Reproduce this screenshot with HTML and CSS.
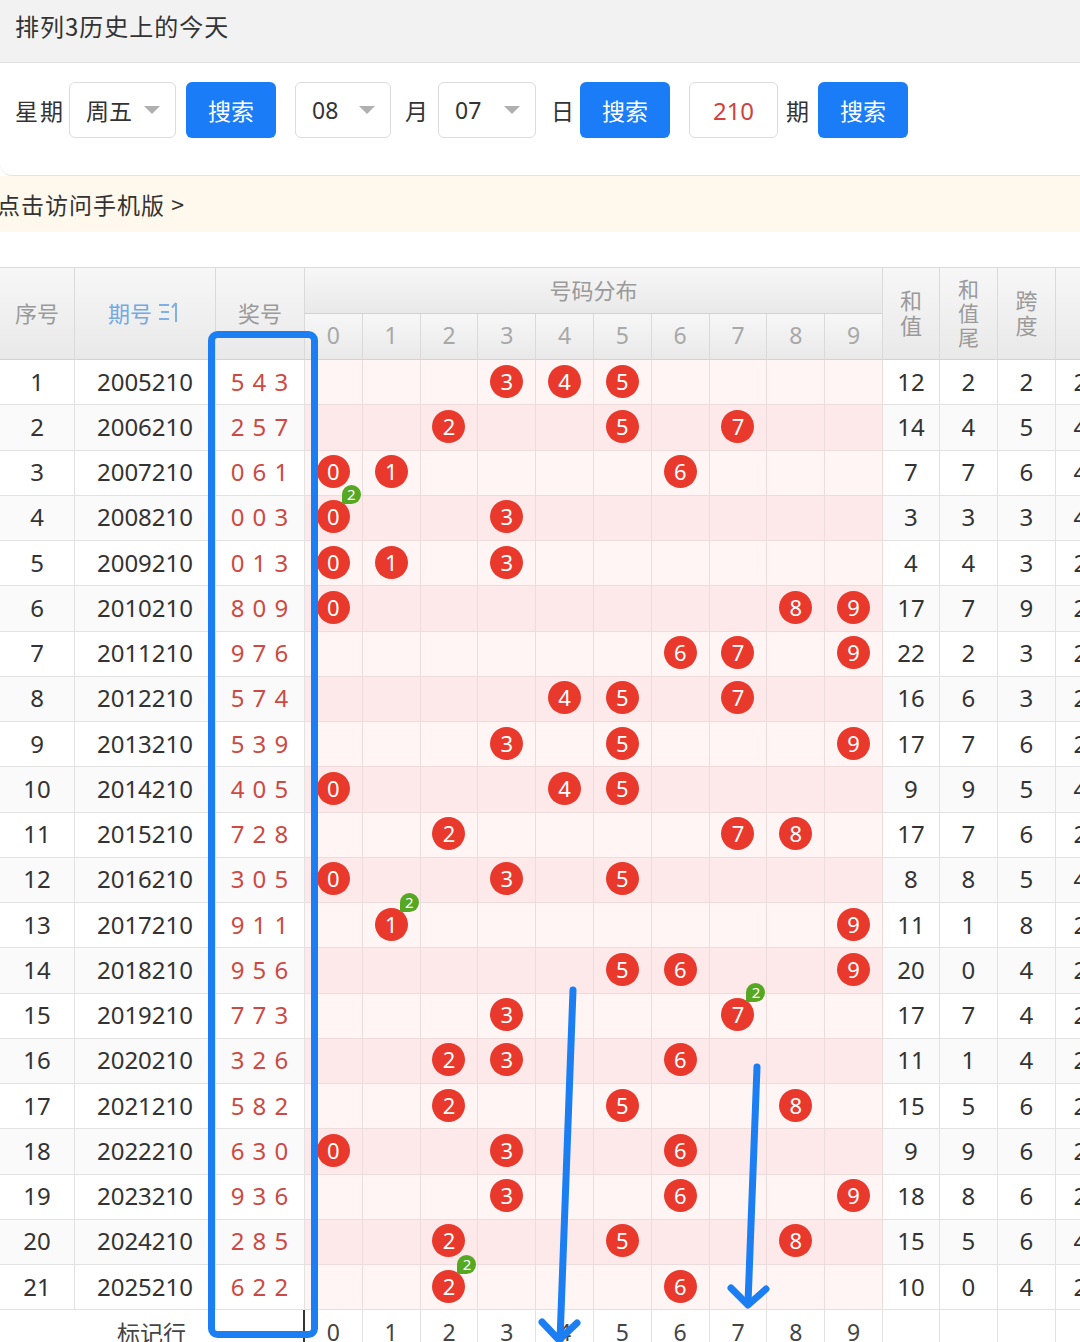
FILE: index.html
```html
<!DOCTYPE html>
<html lang="zh-CN">
<head>
<meta charset="utf-8">
<title>排列3历史上的今天</title>
<link rel="stylesheet" href="styles.css">
</head>
<body>
<div class="page">
  <div class="topbar">排列3历史上的今天</div>
  <div class="panel">
    <div class="controls">
      <span class="lbl wide m4">星期</span>
      <div class="sel w107 m10"><span>周五</span><i class="caret"></i></div>
      <button class="btn m19">搜索</button>
      <div class="sel w96 m14"><span>08</span><i class="caret"></i></div>
      <span class="lbl m10">月</span>
      <div class="sel w98 m15"><span>07</span><i class="caret"></i></div>
      <span class="lbl m6">日</span>
      <button class="btn m19">搜索</button>
      <div class="inp m8">210</div>
      <span class="lbl m9">期</span>
      <button class="btn">搜索</button>
    </div>
  </div>
  <div class="notice">点击访问手机版 &gt;</div>

  <div class="tablewrap">
    <div class="thead">
      <div class="h span2">序号</div>
      <div class="h span2 blue">期号 <svg class="sorticon" width="24" height="24" viewBox="0 0 24 24"><path d="M1 5h10M3 12h8M1 19h10" stroke="#7fb0e6" stroke-width="2" fill="none"/><path d="M18 22V3M14 7.5L18 3" stroke="#7fb0e6" stroke-width="2" fill="none"/></svg></div>
      <div class="h span2">奖号</div>
      <div class="h dist">号码分布</div>
      <div class="h span2 stack s2"><span>和</span><span>值</span></div>
      <div class="h span2 stack s3"><span>和</span><span>值</span><span>尾</span></div>
      <div class="h span2 stack s2"><span>跨</span><span>度</span></div>
      <div class="h span2"></div>
      <div class="h hd">0</div><div class="h hd">1</div><div class="h hd">2</div><div class="h hd">3</div><div class="h hd">4</div>
      <div class="h hd">5</div><div class="h hd">6</div><div class="h hd">7</div><div class="h hd">8</div><div class="h hd">9</div>
    </div>

    <div class="tbody">
      <div class="row odd"><div class="c">1</div><div class="c">2005210</div><div class="c prize">5 4 3</div><div class="d"></div><div class="d"></div><div class="d"></div><div class="d"><span class="ball">3</span></div><div class="d"><span class="ball">4</span></div><div class="d"><span class="ball">5</span></div><div class="d"></div><div class="d"></div><div class="d"></div><div class="d"></div><div class="c">12</div><div class="c">2</div><div class="c">2</div><div class="c">2</div></div>
      <div class="row even"><div class="c">2</div><div class="c">2006210</div><div class="c prize">2 5 7</div><div class="d"></div><div class="d"></div><div class="d"><span class="ball">2</span></div><div class="d"></div><div class="d"></div><div class="d"><span class="ball">5</span></div><div class="d"></div><div class="d"><span class="ball">7</span></div><div class="d"></div><div class="d"></div><div class="c">14</div><div class="c">4</div><div class="c">5</div><div class="c">4</div></div>
      <div class="row odd"><div class="c">3</div><div class="c">2007210</div><div class="c prize">0 6 1</div><div class="d"><span class="ball">0</span></div><div class="d"><span class="ball">1</span></div><div class="d"></div><div class="d"></div><div class="d"></div><div class="d"></div><div class="d"><span class="ball">6</span></div><div class="d"></div><div class="d"></div><div class="d"></div><div class="c">7</div><div class="c">7</div><div class="c">6</div><div class="c">4</div></div>
      <div class="row even"><div class="c">4</div><div class="c">2008210</div><div class="c prize">0 0 3</div><div class="d"><span class="ball">0<i class="badge">2</i></span></div><div class="d"></div><div class="d"></div><div class="d"><span class="ball">3</span></div><div class="d"></div><div class="d"></div><div class="d"></div><div class="d"></div><div class="d"></div><div class="d"></div><div class="c">3</div><div class="c">3</div><div class="c">3</div><div class="c">4</div></div>
      <div class="row odd"><div class="c">5</div><div class="c">2009210</div><div class="c prize">0 1 3</div><div class="d"><span class="ball">0</span></div><div class="d"><span class="ball">1</span></div><div class="d"></div><div class="d"><span class="ball">3</span></div><div class="d"></div><div class="d"></div><div class="d"></div><div class="d"></div><div class="d"></div><div class="d"></div><div class="c">4</div><div class="c">4</div><div class="c">3</div><div class="c">2</div></div>
      <div class="row even"><div class="c">6</div><div class="c">2010210</div><div class="c prize">8 0 9</div><div class="d"><span class="ball">0</span></div><div class="d"></div><div class="d"></div><div class="d"></div><div class="d"></div><div class="d"></div><div class="d"></div><div class="d"></div><div class="d"><span class="ball">8</span></div><div class="d"><span class="ball">9</span></div><div class="c">17</div><div class="c">7</div><div class="c">9</div><div class="c">2</div></div>
      <div class="row odd"><div class="c">7</div><div class="c">2011210</div><div class="c prize">9 7 6</div><div class="d"></div><div class="d"></div><div class="d"></div><div class="d"></div><div class="d"></div><div class="d"></div><div class="d"><span class="ball">6</span></div><div class="d"><span class="ball">7</span></div><div class="d"></div><div class="d"><span class="ball">9</span></div><div class="c">22</div><div class="c">2</div><div class="c">3</div><div class="c">2</div></div>
      <div class="row even"><div class="c">8</div><div class="c">2012210</div><div class="c prize">5 7 4</div><div class="d"></div><div class="d"></div><div class="d"></div><div class="d"></div><div class="d"><span class="ball">4</span></div><div class="d"><span class="ball">5</span></div><div class="d"></div><div class="d"><span class="ball">7</span></div><div class="d"></div><div class="d"></div><div class="c">16</div><div class="c">6</div><div class="c">3</div><div class="c">2</div></div>
      <div class="row odd"><div class="c">9</div><div class="c">2013210</div><div class="c prize">5 3 9</div><div class="d"></div><div class="d"></div><div class="d"></div><div class="d"><span class="ball">3</span></div><div class="d"></div><div class="d"><span class="ball">5</span></div><div class="d"></div><div class="d"></div><div class="d"></div><div class="d"><span class="ball">9</span></div><div class="c">17</div><div class="c">7</div><div class="c">6</div><div class="c">2</div></div>
      <div class="row even"><div class="c">10</div><div class="c">2014210</div><div class="c prize">4 0 5</div><div class="d"><span class="ball">0</span></div><div class="d"></div><div class="d"></div><div class="d"></div><div class="d"><span class="ball">4</span></div><div class="d"><span class="ball">5</span></div><div class="d"></div><div class="d"></div><div class="d"></div><div class="d"></div><div class="c">9</div><div class="c">9</div><div class="c">5</div><div class="c">4</div></div>
      <div class="row odd"><div class="c">11</div><div class="c">2015210</div><div class="c prize">7 2 8</div><div class="d"></div><div class="d"></div><div class="d"><span class="ball">2</span></div><div class="d"></div><div class="d"></div><div class="d"></div><div class="d"></div><div class="d"><span class="ball">7</span></div><div class="d"><span class="ball">8</span></div><div class="d"></div><div class="c">17</div><div class="c">7</div><div class="c">6</div><div class="c">2</div></div>
      <div class="row even"><div class="c">12</div><div class="c">2016210</div><div class="c prize">3 0 5</div><div class="d"><span class="ball">0</span></div><div class="d"></div><div class="d"></div><div class="d"><span class="ball">3</span></div><div class="d"></div><div class="d"><span class="ball">5</span></div><div class="d"></div><div class="d"></div><div class="d"></div><div class="d"></div><div class="c">8</div><div class="c">8</div><div class="c">5</div><div class="c">4</div></div>
      <div class="row odd"><div class="c">13</div><div class="c">2017210</div><div class="c prize">9 1 1</div><div class="d"></div><div class="d"><span class="ball">1<i class="badge">2</i></span></div><div class="d"></div><div class="d"></div><div class="d"></div><div class="d"></div><div class="d"></div><div class="d"></div><div class="d"></div><div class="d"><span class="ball">9</span></div><div class="c">11</div><div class="c">1</div><div class="c">8</div><div class="c">2</div></div>
      <div class="row even"><div class="c">14</div><div class="c">2018210</div><div class="c prize">9 5 6</div><div class="d"></div><div class="d"></div><div class="d"></div><div class="d"></div><div class="d"></div><div class="d"><span class="ball">5</span></div><div class="d"><span class="ball">6</span></div><div class="d"></div><div class="d"></div><div class="d"><span class="ball">9</span></div><div class="c">20</div><div class="c">0</div><div class="c">4</div><div class="c">2</div></div>
      <div class="row odd"><div class="c">15</div><div class="c">2019210</div><div class="c prize">7 7 3</div><div class="d"></div><div class="d"></div><div class="d"></div><div class="d"><span class="ball">3</span></div><div class="d"></div><div class="d"></div><div class="d"></div><div class="d"><span class="ball">7<i class="badge">2</i></span></div><div class="d"></div><div class="d"></div><div class="c">17</div><div class="c">7</div><div class="c">4</div><div class="c">2</div></div>
      <div class="row even"><div class="c">16</div><div class="c">2020210</div><div class="c prize">3 2 6</div><div class="d"></div><div class="d"></div><div class="d"><span class="ball">2</span></div><div class="d"><span class="ball">3</span></div><div class="d"></div><div class="d"></div><div class="d"><span class="ball">6</span></div><div class="d"></div><div class="d"></div><div class="d"></div><div class="c">11</div><div class="c">1</div><div class="c">4</div><div class="c">2</div></div>
      <div class="row odd"><div class="c">17</div><div class="c">2021210</div><div class="c prize">5 8 2</div><div class="d"></div><div class="d"></div><div class="d"><span class="ball">2</span></div><div class="d"></div><div class="d"></div><div class="d"><span class="ball">5</span></div><div class="d"></div><div class="d"></div><div class="d"><span class="ball">8</span></div><div class="d"></div><div class="c">15</div><div class="c">5</div><div class="c">6</div><div class="c">2</div></div>
      <div class="row even"><div class="c">18</div><div class="c">2022210</div><div class="c prize">6 3 0</div><div class="d"><span class="ball">0</span></div><div class="d"></div><div class="d"></div><div class="d"><span class="ball">3</span></div><div class="d"></div><div class="d"></div><div class="d"><span class="ball">6</span></div><div class="d"></div><div class="d"></div><div class="d"></div><div class="c">9</div><div class="c">9</div><div class="c">6</div><div class="c">2</div></div>
      <div class="row odd"><div class="c">19</div><div class="c">2023210</div><div class="c prize">9 3 6</div><div class="d"></div><div class="d"></div><div class="d"></div><div class="d"><span class="ball">3</span></div><div class="d"></div><div class="d"></div><div class="d"><span class="ball">6</span></div><div class="d"></div><div class="d"></div><div class="d"><span class="ball">9</span></div><div class="c">18</div><div class="c">8</div><div class="c">6</div><div class="c">2</div></div>
      <div class="row even"><div class="c">20</div><div class="c">2024210</div><div class="c prize">2 8 5</div><div class="d"></div><div class="d"></div><div class="d"><span class="ball">2</span></div><div class="d"></div><div class="d"></div><div class="d"><span class="ball">5</span></div><div class="d"></div><div class="d"></div><div class="d"><span class="ball">8</span></div><div class="d"></div><div class="c">15</div><div class="c">5</div><div class="c">6</div><div class="c">4</div></div>
      <div class="row odd"><div class="c">21</div><div class="c">2025210</div><div class="c prize">6 2 2</div><div class="d"></div><div class="d"></div><div class="d"><span class="ball">2<i class="badge">2</i></span></div><div class="d"></div><div class="d"></div><div class="d"></div><div class="d"><span class="ball">6</span></div><div class="d"></div><div class="d"></div><div class="d"></div><div class="c">10</div><div class="c">0</div><div class="c">4</div><div class="c">2</div></div>
      <div class="row foot"><div class="c mark">标记行</div><div class="c">0</div><div class="c">1</div><div class="c">2</div><div class="c">3</div><div class="c">4</div><div class="c">5</div><div class="c">6</div><div class="c">7</div><div class="c">8</div><div class="c">9</div><div class="c"></div><div class="c"></div><div class="c"></div><div class="c"></div></div>
    </div>
  </div>

  <svg class="annot" width="1080" height="1342" viewBox="0 0 1080 1342">
    <rect x="211.5" y="334.5" width="103" height="1000" rx="6" ry="6" fill="none" stroke="#1b7ef2" stroke-width="7"/>
    <path d="M573 990 L560 1340" stroke="#1b7ef2" stroke-width="7" stroke-linecap="round" fill="none"/>
    <path d="M542 1322 L559 1340 L577 1323" stroke="#1b7ef2" stroke-width="7" stroke-linecap="round" stroke-linejoin="round" fill="none"/>
    <path d="M757 1067 L748 1303" stroke="#1b7ef2" stroke-width="7" stroke-linecap="round" fill="none"/>
    <path d="M731 1288 L748 1305 L766 1289" stroke="#1b7ef2" stroke-width="7" stroke-linecap="round" stroke-linejoin="round" fill="none"/>
  </svg>
</div>
</body>
</html>
```

FILE: styles.css
```css
* { box-sizing: border-box; }
html, body { margin: 0; padding: 0; background: #fff; }
body {
  font-family: "Noto Sans", "Noto Sans CJK SC", sans-serif;
  color: #333;
  width: 1080px;
  overflow: hidden;
}
.page { position: relative; width: 1080px; height: 1342px; overflow: hidden; }

.topbar {
  height: 63px;
  background: #f2f2f2;
  border-bottom: 1px solid #e2e2e2;
  padding-left: 15px;
  font-family: "Noto Sans CJK SC", sans-serif;
  font-size: 24px;
  letter-spacing: 1px;
  line-height: 52px;
  color: #333;
}

.panel {
  height: 113px;
  background: #fff;
  border-bottom: 1px solid #e4e4e4;
  border-bottom-left-radius: 12px;
  padding: 19px 0 0 15px;
}
.controls { display: flex; align-items: center; height: 56px; }
.lbl { font-family: "Noto Sans CJK SC", sans-serif; font-size: 23px; color: #333; }
.lbl.wide { letter-spacing: 2px; }
.m4 { margin-right: 4px; }
.m6 { margin-right: 6px; }
.m8 { margin-right: 8px; }
.m9 { margin-right: 9px; }
.m10 { margin-right: 10px; }
.m14 { margin-right: 14px; }
.m15 { margin-right: 15px; }
.m19 { margin-right: 19px; }
.sel {
  height: 56px;
  border: 1px solid #dcdcdc;
  border-radius: 6px;
  background: #fff;
  display: flex;
  align-items: center;
  justify-content: space-between;
  padding: 0 15px 0 16px;
  font-family: "Noto Sans", "Noto Sans CJK SC", sans-serif;
  font-size: 23px;
  color: #333;
}
.w107 { width: 107px; }
.w96 { width: 96px; }
.w98 { width: 98px; }
.caret {
  width: 0; height: 0;
  border-left: 8px solid transparent;
  border-right: 8px solid transparent;
  border-top: 8px solid #b0b0b0;
}
.btn {
  width: 90px;
  height: 56px;
  border: 0;
  border-radius: 6px;
  background: #1a7cf6;
  color: #fff;
  font-family: "Noto Sans CJK SC", sans-serif;
  font-size: 23px;
  padding: 0;
}
.inp {
  width: 89px;
  height: 56px;
  border: 1px solid #dcdcdc;
  border-radius: 6px;
  display: flex;
  align-items: center;
  justify-content: center;
  color: #d0433b;
  font-size: 24px;
}

.notice {
  height: 56px;
  background: #fff8ec;
  font-family: "Noto Sans CJK SC", sans-serif;
  font-size: 23px;
  letter-spacing: 1px;
  line-height: 56px;
  text-indent: -3px;
  color: #333;
}

.tablewrap { margin-top: 35px; width: 1080px; overflow: hidden; }

.thead, .row {
  display: grid;
  grid-template-columns: 75px 141px 89px repeat(10, 57.8px) 57px 58px 58px 50px;
  width: 1106px;
}
.thead {
  grid-template-rows: 46px 46px;
  border-top: 1px solid #dcdcdc;
}
.h {
  background: linear-gradient(#f7f7f7, #e9e9e9);
  border-right: 1px solid #dadada;
  border-bottom: 1px solid #d2d2d2;
  display: flex;
  align-items: center;
  justify-content: center;
  padding-bottom: 3px;
  font-family: "Noto Sans CJK SC", sans-serif;
  font-size: 22px;
  color: #9a9a9a;
}
.span2 { grid-row: span 2; }
.dist { grid-column: span 10; }
.blue { color: #74a9e4; }
.sorticon { margin-left: 6px; }
.hd { font-family: "Noto Sans", sans-serif; font-size: 23px; color: #a8a8a8; }
.stack { flex-direction: column; }
.stack span { display: block; }
.s2 span { font-size: 22px; line-height: 25px; }
.s3 span { font-size: 21px; line-height: 24px; }

.row { height: 45.25px; }
.c, .d {
  border-right: 1px solid #e2e2e2;
  border-bottom: 1px solid #e2e2e2;
  display: flex;
  align-items: center;
  justify-content: center;
  padding-bottom: 2px;
  font-size: 24px;
  color: #333;
}
.row.even .c { background: #fafafa; }
.row.odd .d { background: #fff5f4; }
.row.even .d { background: #fde9e9; }
.row .d { border-color: #ecdcdc; }
.prize { color: #cc4a43; letter-spacing: 1px; }

.ball {
  position: relative;
  width: 33px;
  height: 33px;
  border-radius: 50%;
  background: #e8392c;
  color: #fff;
  font-size: 22px;
  line-height: 33px;
  text-align: center;
}
.badge {
  position: absolute;
  left: 25px;
  top: -15px;
  width: 19px;
  height: 19px;
  border-radius: 50% 50% 50% 0;
  background: #56a823;
  color: #fff;
  font-style: normal;
  font-size: 15px;
  line-height: 19px;
  text-align: center;
  z-index: 2;
}

.row.foot { height: 46px; }
.row.foot .c { background: #fff; color: #444; font-size: 23px; }
.row.foot .mark {
  grid-column: span 3;
  font-family: "Noto Sans CJK SC", sans-serif;
  border-right: 2px solid #333;
}

.annot { position: absolute; left: 0; top: 0; z-index: 10; pointer-events: none; }
```
